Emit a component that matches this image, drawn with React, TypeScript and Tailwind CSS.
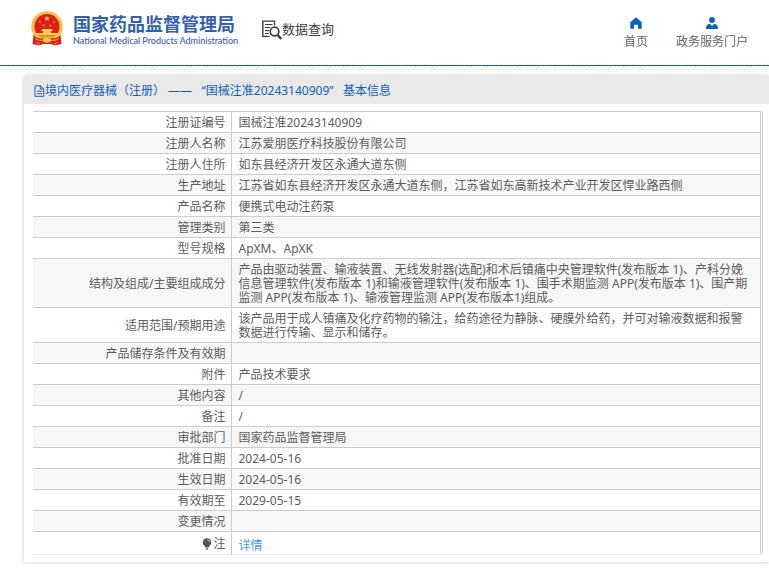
import type { ReactNode } from "react";

interface Row {
  label: ReactNode;
  value: ReactNode;
}

function Bulb() {
  return (
    <svg viewBox="0 0 10 12" className="w-[10px] h-3" fill="none" aria-hidden="true">
      <circle cx="5" cy="4.500" r="4.200" fill="#555" />
      <path d="M2.500 7.500h5L6.500 9.500h-3zM3.800 10.200h2.400v1.300H3.800z" fill="#555" />
      <path d="M5.400 2c1.300.1 2.100.9 2.200 2.200" stroke="#eee" strokeWidth="0.9" />
    </svg>
  );
}

const rows: Row[] = [
  { label: "注册证编号", value: "国械注准20243140909" },
  { label: "注册人名称", value: "江苏爱朋医疗科技股份有限公司" },
  { label: "注册人住所", value: "如东县经济开发区永通大道东侧" },
  { label: "生产地址", value: "江苏省如东县经济开发区永通大道东侧，江苏省如东高新技术产业开发区悍业路西侧" },
  { label: "产品名称", value: "便携式电动注药泵" },
  { label: "管理类别", value: "第三类" },
  { label: "型号规格", value: "ApXM、ApXK" },
  {
    label: "结构及组成/主要组成成分",
    value:
      "产品由驱动装置、输液装置、无线发射器(选配)和术后镇痛中央管理软件(发布版本 1)、产科分娩信息管理软件(发布版本 1)和输液管理软件(发布版本 1)、围手术期监测 APP(发布版本 1)、围产期监测 APP(发布版本 1)、输液管理监测 APP(发布版本1)组成。",
  },
  {
    label: "适用范围/预期用途",
    value:
      "该产品用于成人镇痛及化疗药物的输注，给药途径为静脉、硬膜外给药，并可对输液数据和报警数据进行传输、显示和储存。",
  },
  { label: "产品储存条件及有效期", value: "" },
  { label: "附件", value: "产品技术要求" },
  { label: "其他内容", value: "/" },
  { label: "备注", value: "/" },
  { label: "审批部门", value: "国家药品监督管理局" },
  { label: "批准日期", value: "2024-05-16" },
  { label: "生效日期", value: "2024-05-16" },
  { label: "有效期至", value: "2029-05-15" },
  { label: "变更情况", value: "" },
];

function Emblem() {
  return (
    <svg viewBox="0 0 64 70" className="w-8 h-[35px]" aria-hidden="true">
      <path d="M5 48 3 66l14 3 6-3h18l6 3 14-3-2-18z" fill="#d9231c" />
      <ellipse cx="32" cy="31" rx="31.5" ry="30.5" fill="#f3bd3c" />
      <ellipse cx="32" cy="31" rx="28.5" ry="28" fill="none" stroke="#fbd965" strokeWidth="1.6" strokeDasharray="2 2" />
      <circle cx="32" cy="31" r="25" fill="#dc1f1b" />
      <path d="m32 9 1.500 4.200h4.400l-3.500 2.700 1.300 4.300-3.700-2.600-3.700 2.600 1.300-4.300-3.500-2.700h4.400z" fill="#ffc94a" />
      <g fill="#f9b53f">
        <path d="m18 19 .8 1.800h2l-1.500 1.400.6 2-1.900-1.200-1.900 1.200.6-2-1.500-1.400h2zM46 19l.8 1.800h2l-1.500 1.400.6 2-1.900-1.200-1.900 1.200.6-2-1.500-1.400h2zM25 26l.8 1.800h2l-1.500 1.400.6 2-1.900-1.200-1.900 1.200.6-2-1.500-1.400h2zM39 26l.8 1.800h2l-1.500 1.400.6 2-1.900-1.200-1.900 1.200.6-2-1.500-1.400h2z" />
        <path fill="#ffd34a" d="M23 36h18l3 4h-4v4h14v5H10v-5h14v-4h-4z" />
      </g>
      <path d="M10 52c7 4 37 4 44 0l3 6c-9 4-16 2-19 5H26c-3-3-10-1-19-5z" fill="#d9231c" />
      <path d="M12 52h40" stroke="#f6c544" strokeWidth="3" />
      <ellipse cx="32" cy="58" rx="8" ry="5.500" fill="#f6c544" />
      <path d="M9 55c5 4 11 4 16 3M55 55c-5 4-11 4-16 3M12 62l5 5M52 62l-5 5" stroke="#f6c544" strokeWidth="2" fill="none" />
    </svg>
  );
}

function SearchDoc() {
  return (
    <svg viewBox="0 0 20 20" className="w-5 h-5" fill="none" stroke="#3a3d45" aria-hidden="true">
      <path d="M12.500 5.500V1.100H.8v15.300h6.700" strokeWidth="1.400" />
      <path d="M3 4.500h7.500M3 7.500h5M3 10.500h4M3 13.500h4" strokeWidth="1.200" />
      <circle cx="12.500" cy="11.500" r="4.300" strokeWidth="1.700" />
      <path d="m15.700 14.900 3.500 4" strokeWidth="2.300" />
    </svg>
  );
}

function Header() {
  return (
    <header>
      <div className="flex items-center h-[65px] pl-[31px] pr-[21px] pb-2">
        <a href="#" className="flex items-center gap-[10px]">
          <Emblem />
          <span className="flex flex-col pt-[2px] text-[#3560ac]">
            <span className="text-[18px] leading-[22px] font-bold">国家药品监督管理局</span>
            <span className="font-[Lato,sans-serif] font-medium text-[9px] leading-3">
              National Medical Products Administration
            </span>
          </span>
        </a>
        <div className="flex items-center ml-6 pt-[2px] text-[#3c3c3c]">
          <SearchDoc />
          <span className="text-[13px]">数据查询</span>
        </div>
        <nav className="flex gap-7 ml-auto mt-[10px] text-[#666] leading-4">
          <a href="#" className="flex flex-col items-center gap-[5px]">
            <svg viewBox="0 0 12 12" className="w-3 h-3" fill="#0b5fc0" aria-hidden="true">
              <path d="M6 .3 11.700 5.200v6.500H8V7.800H4v3.900H.3V5.200z" />
            </svg>
            首页
          </a>
          <a href="#" className="flex flex-col items-center gap-[5px]">
            <svg viewBox="0 0 12 12" className="w-3 h-3" fill="#0b5fc0" aria-hidden="true">
              <circle cx="6" cy="3" r="2.900" />
              <path d="M0 12c0-3.300 1.400-5 3.700-5.300L6 9l2.300-2.300C10.600 7 12 8.700 12 12z" />
            </svg>
            政务服务门户
          </a>
        </nav>
      </div>
      <div className="h-px bg-[#1c5a98]" />
      <div className="h-1 bg-[repeating-linear-gradient(135deg,#ececec_0px,#ececec_1px,#ffffff_1px,#ffffff_3px)]" />
    </header>
  );
}

export default function App() {
  return (
    <div className="bg-white font-['Noto_Sans','Noto_Sans_CJK_SC',sans-serif] text-[12px] text-[#5c5c5c]">
      <Header />
      <main className="pt-[6px] pl-6 pb-2 overflow-hidden">
        <section className="bg-white shadow-[0_0_5px_rgba(0,0,0,0.2)]">
          <h1 className="flex items-center h-7 pt-px pl-[10px] bg-[#e9e9e9] text-[#1460b8] whitespace-pre">
            <svg viewBox="0 0 11 12" className="w-[11px] h-3" fill="none" stroke="#1460b8" aria-hidden="true">
              <path d="M1 .8h5.500L9.800 4v7.300H1zM6.300.8V4h3.500M3 6.200h5M3 8.700h5" />
            </svg>
            境内医疗器械（注册） ——   “国械注准20243140909”   基本信息
          </h1>
          <div className="pt-[7px] pl-[9px] pr-[6px] pb-[7px]">
            <div className="border-r border-[#ccc] pr-px">
              <table className="w-full border-collapse border-t border-r border-[#ccc] leading-[14px]">
                <tbody>
                  {rows.map((row, i) => (
                    <tr key={i} className="h-[21px] border-b border-[#ccc] even:bg-[#f7f7f7]">
                      <th scope="row" className="w-[198px] pt-1 pb-[2px] pr-[5px] border-r border-[#ccc] text-right font-normal">
                        {row.label}
                      </th>
                      <td className="pt-1 pb-[2px] px-[7px]">{row.value}</td>
                    </tr>
                  ))}
                  <tr className="h-[23px] border-b border-[#e6e6e6]">
                    <th scope="row" className="pt-1 pb-[2px] pr-[5px] border-r border-[#ccc] font-normal">
                      <span className="flex items-center justify-end gap-px">
                        <Bulb />注
                      </span>
                    </th>
                    <td className="pt-[6px] px-[7px]">
                      <a href="#" className="text-[#3f95e6]">详情</a>
                    </td>
                  </tr>
                </tbody>
              </table>
            </div>
          </div>
        </section>
      </main>
    </div>
  );
}
